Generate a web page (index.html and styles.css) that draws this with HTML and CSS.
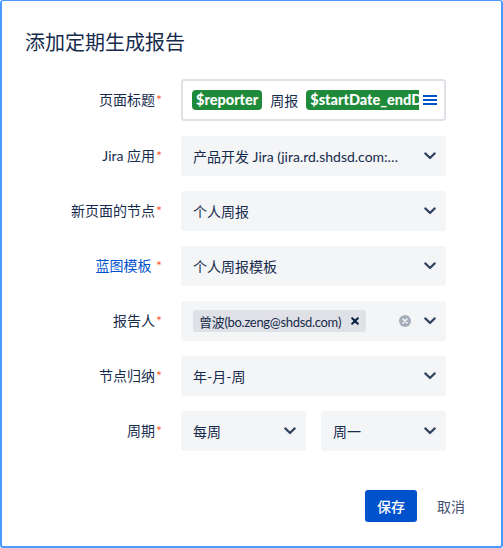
FILE: index.html
```html
<!DOCTYPE html>
<html lang="zh">
<head>
<meta charset="utf-8">
<title>添加定期生成报告</title>
<link rel="stylesheet" href="styles.css">
</head>
<body>
<div class="dialog">
  <div class="header"><h1 class="title">添加定期生成报告</h1></div>
  <div class="form">
    <div class="row row-first">
      <div class="label">页面标题<span class="req">*</span></div>
      <div class="field field-title">
        <div class="tokens">
          <span class="pill">$reporter</span>
          <span class="plain">周报</span>
          <span class="pill">$startDate_endDate</span>
        </div>
        <svg class="menu" width="14" height="10" viewBox="0 0 14 10"><rect x="0" y="0" width="14" height="2" fill="#0052cc"/><rect x="0" y="4" width="14" height="2" fill="#0052cc"/><rect x="0" y="8" width="14" height="2" fill="#0052cc"/></svg>
      </div>
    </div>
    <div class="row">
      <div class="label">Jira 应用<span class="req">*</span></div>
      <div class="field select">
        <span class="value">产品开发 Jira (jira.rd.shdsd.com:8280)</span>
        <svg class="chev" width="12" height="8" viewBox="0 0 12 8"><polyline points="1.3,1.4 6,6 10.7,1.4" fill="none" stroke="#344563" stroke-width="2.2" stroke-linecap="round" stroke-linejoin="round"/></svg>
      </div>
    </div>
    <div class="row">
      <div class="label">新页面的节点<span class="req">*</span></div>
      <div class="field select">
        <span class="value">个人周报</span>
        <svg class="chev" width="12" height="8" viewBox="0 0 12 8"><polyline points="1.3,1.4 6,6 10.7,1.4" fill="none" stroke="#344563" stroke-width="2.2" stroke-linecap="round" stroke-linejoin="round"/></svg>
      </div>
    </div>
    <div class="row">
      <div class="label label-link">蓝图模板 <span class="req">*</span></div>
      <div class="field select">
        <span class="value">个人周报模板</span>
        <svg class="chev" width="12" height="8" viewBox="0 0 12 8"><polyline points="1.3,1.4 6,6 10.7,1.4" fill="none" stroke="#344563" stroke-width="2.2" stroke-linecap="round" stroke-linejoin="round"/></svg>
      </div>
    </div>
    <div class="row">
      <div class="label">报告人<span class="req">*</span></div>
      <div class="field select">
        <span class="tag">曾波(bo.zeng@shdsd.com)<svg class="tag-x" width="8" height="8" viewBox="0 0 8 8"><path d="M1.2 1.2 L6.8 6.8 M6.8 1.2 L1.2 6.8" stroke="#091e42" stroke-width="2" stroke-linecap="round"/></svg></span>
        <div class="icons">
          <svg class="clear" width="12" height="12" viewBox="0 0 12 12"><circle cx="6" cy="6" r="6" fill="#a5adba"/><path d="M4 4 L8 8 M8 4 L4 8" stroke="#f4f5f7" stroke-width="1.6" stroke-linecap="round"/></svg>
          <svg class="chev" width="12" height="8" viewBox="0 0 12 8"><polyline points="1.3,1.4 6,6 10.7,1.4" fill="none" stroke="#344563" stroke-width="2.2" stroke-linecap="round" stroke-linejoin="round"/></svg>
        </div>
      </div>
    </div>
    <div class="row">
      <div class="label">节点归纳<span class="req">*</span></div>
      <div class="field select">
        <span class="value">年-月-周</span>
        <svg class="chev" width="12" height="8" viewBox="0 0 12 8"><polyline points="1.3,1.4 6,6 10.7,1.4" fill="none" stroke="#344563" stroke-width="2.2" stroke-linecap="round" stroke-linejoin="round"/></svg>
      </div>
    </div>
    <div class="row">
      <div class="label">周期<span class="req">*</span></div>
      <div class="pair">
        <div class="field select">
          <span class="value">每周</span>
          <svg class="chev" width="12" height="8" viewBox="0 0 12 8"><polyline points="1.3,1.4 6,6 10.7,1.4" fill="none" stroke="#344563" stroke-width="2.2" stroke-linecap="round" stroke-linejoin="round"/></svg>
        </div>
        <div class="field select">
          <span class="value">周一</span>
          <svg class="chev" width="12" height="8" viewBox="0 0 12 8"><polyline points="1.3,1.4 6,6 10.7,1.4" fill="none" stroke="#344563" stroke-width="2.2" stroke-linecap="round" stroke-linejoin="round"/></svg>
        </div>
      </div>
    </div>
  </div>
  <div class="footer">
    <button class="btn btn-primary">保存</button>
    <button class="btn btn-subtle">取消</button>
  </div>
</div>
</body>
</html>
```

FILE: styles.css
```css
html, body {
  margin: 0;
  padding: 0;
  background: #ffffff;
}
body {
  font-family: Lato, "Noto Sans CJK SC", sans-serif;
  color: #172b4d;
}
.dialog {
  box-sizing: border-box;
  width: 503px;
  height: 548px;
  border: 2px solid #4c9aff;
  border-top-width: 1px;
  border-radius: 3px;
  background: #ffffff;
  display: flex;
  flex-direction: column;
}
.header {
  padding: 29px 23px 0 23px;
}
.title {
  margin: 0;
  font-size: 20px;
  line-height: 24px;
  font-weight: 400;
  color: #172b4d;
  font-family: "Noto Sans CJK SC", sans-serif;
}
.form {
  margin-top: 25px;
  display: flex;
  flex-direction: column;
  gap: 15px;
}
.row {
  display: grid;
  grid-template-columns: 160px 265px;
  column-gap: 19px;
  align-items: center;
}
.label {
  text-align: right;
  font-size: 14px;
  line-height: 20px;
  color: #172b4d;
}
.label-link {
  color: #0052cc;
}
.req {
  color: #ff5630;
  font-size: 14px;
  margin-left: 1px;
}
.field {
  box-sizing: border-box;
  height: 40px;
  border-radius: 3px;
  display: flex;
  align-items: center;
  min-width: 0;
}
.select {
  background: #f4f5f7;
  padding: 0 10px 0 12px;
  justify-content: space-between;
}
.value {
  font-size: 14px;
  color: #172b4d;
  white-space: nowrap;
  overflow: hidden;
  text-overflow: ellipsis;
  flex: 1;
  min-width: 0;
  padding-right: 22px;
}
.chev {
  display: block;
  flex: none;
}
.field-title {
  height: 42px;
  border: 2px solid #dfe1e6;
  background: #ffffff;
  padding: 0 7px 0 9px;
}
.tokens {
  flex: 1;
  min-width: 0;
  overflow: hidden;
  display: flex;
  align-items: center;
  gap: 8px;
  white-space: nowrap;
  margin-right: 4px;
}
.pill {
  flex: none;
  background: #1e8a3a;
  color: #ffffff;
  font-weight: 900;
  font-size: 14.5px;
  line-height: 20px;
  height: 20px;
  padding: 0 4px 0 4px;
  border-radius: 4px;
}
.plain {
  flex: none;
  font-size: 14px;
  color: #172b4d;
}
.menu {
  display: block;
  flex: none;
}
.tag {
  display: flex;
  align-items: center;
  height: 22px;
  background: #dfe1e6;
  border-radius: 3px;
  padding: 0 7px 0 6px;
  font-size: 13px;
  letter-spacing: -0.3px;
  color: #172b4d;
  white-space: nowrap;
}
.tag-x {
  display: block;
  margin-left: 10px;
  flex: none;
}
.icons {
  display: flex;
  align-items: center;
  gap: 13px;
}
.clear {
  display: block;
}
.pair {
  display: grid;
  grid-template-columns: 125px 125px;
  column-gap: 15px;
}
.footer {
  margin-top: 39px;
  display: flex;
  justify-content: flex-end;
  gap: 8px;
  padding-right: 24px;
}
.btn {
  height: 32px;
  padding: 0 12px;
  border: none;
  border-radius: 3px;
  font-family: "Noto Sans CJK SC", sans-serif;
  font-size: 14px;
  cursor: pointer;
}
.btn-primary {
  background: #0052cc;
  color: #ffffff;
  font-weight: 500;
}
.btn-subtle {
  background: transparent;
  color: #42526e;
}
```
